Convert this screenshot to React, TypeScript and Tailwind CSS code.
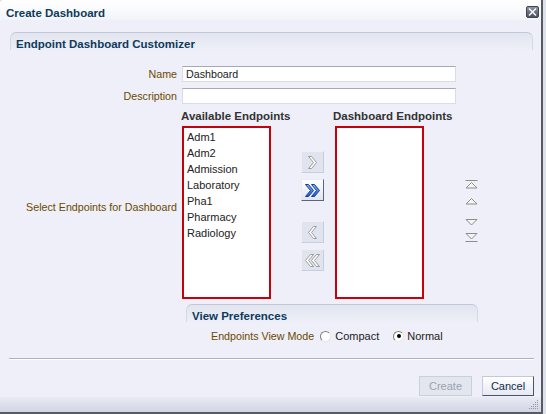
import React from 'react';

const endpoints = ['Adm1', 'Adm2', 'Admission', 'Laboratory', 'Pha1', 'Pharmacy', 'Radiology'];

// chevron glyph, drawn as outline
function Chevron({ dir, double, active }: { dir: 'right' | 'left'; double?: boolean; active?: boolean }) {
  const one = '0,0 3,0 8,6 3,12 0,12 5,6';
  const two = '6,0 9,0 14,6 9,12 6,12 11,6';
  const w = double ? 15 : 9;
  return (
    <svg width={w} height={13} viewBox={`-0.5 -0.5 ${w} 13`}>
      <defs>
        <linearGradient id="blu" x1="0" y1="0" x2="0" y2="1">
          <stop offset="0" stopColor="#7fb4f5" />
          <stop offset="1" stopColor="#1d58c8" />
        </linearGradient>
      </defs>
      <g transform={dir === 'left' ? `translate(${w - 1} 0) scale(-1 1)` : undefined}>
        <polygon
          points={one}
          fill={active ? 'url(#blu)' : '#ffffff'}
          stroke={active ? '#1b3f8f' : '#9b9b9b'}
          strokeWidth="1"
          strokeLinejoin="round"
        />
        {double && (
          <polygon
            points={two}
            fill={active ? 'url(#blu)' : '#ffffff'}
            stroke={active ? '#1b3f8f' : '#9b9b9b'}
            strokeWidth="1"
            strokeLinejoin="round"
          />
        )}
      </g>
    </svg>
  );
}

function ShuttleButton({ children, active }: { children: React.ReactNode; active?: boolean }) {
  return (
    <div
      className={`w-[23px] h-[22px] flex items-center justify-center border ${
        active
          ? 'bg-gradient-to-b from-white to-[#dfe4f0] border-[#e8ebf3] border-r-[#5d6577] border-b-[#5d6577]'
          : 'bg-[#dfe4ee] border-[#eef0f6] border-r-[#c8cfdc] border-b-[#c8cfdc]'
      }`}
    >
      {children}
    </div>
  );
}

function Reorder({ kind }: { kind: 'top' | 'up' | 'down' | 'bottom' }) {
  return (
    <svg width="13" height="9" viewBox="0 0 13 9">
      {kind === 'top' && (
        <>
          <line x1="0.5" y1="0.5" x2="12.5" y2="0.5" stroke="#8d8d8d" />
          <polygon points="1,8 6.5,2.5 12,8" fill="#f4f4f4" stroke="#8d8d8d" />
        </>
      )}
      {kind === 'up' && <polygon points="1,7 6.5,1.5 12,7" fill="#f4f4f4" stroke="#8d8d8d" />}
      {kind === 'down' && <polygon points="1,1.5 12,1.5 6.5,7" fill="#f4f4f4" stroke="#8d8d8d" />}
      {kind === 'bottom' && (
        <>
          <polygon points="1,0.5 12,0.5 6.5,6" fill="#f4f4f4" stroke="#8d8d8d" />
          <line x1="0.5" y1="8.5" x2="12.5" y2="8.5" stroke="#8d8d8d" />
        </>
      )}
    </svg>
  );
}

function Radio({ checked }: { checked?: boolean }) {
  return (
    <div className="w-[11px] h-[11px] rounded-full border border-[#7f7f7f] border-r-[#e8e8e8] border-b-[#e8e8e8] bg-white flex items-center justify-center">
      {checked && <div className="w-[4px] h-[4px] rounded-full bg-black" />}
    </div>
  );
}

export default function App() {
  return (
    <div className="w-[546px] h-[414px] bg-[#dfe1ea] font-['Liberation_Sans',Arial,sans-serif] text-[10.7px] text-[#222]">
      <div className="w-[543px] h-[414px] flex flex-col bg-[#eeeff8] border-r-2 border-b-2 border-[#555a63] rounded-tl-[4px]">
        {/* title bar */}
        <div className="h-[20px] flex items-start justify-between pl-[6px] pr-[2px] pt-[6px] bg-gradient-to-b from-white to-[#f2f4f9] rounded-tl-[4px]">
          <span className="text-[11.5px] leading-[16px] -mt-[1px] font-bold text-[#0e3a5c]">Create Dashboard</span>
          <div className="w-[13px] h-[12px] rounded-[2px] bg-gradient-to-b from-[#8d94a4] to-[#4a515f] border border-[#3f4551] flex items-center justify-center">
            <svg width="9" height="8" viewBox="0 0 9 8">
              <path d="M1 0.5 L8 7.5 M8 0.5 L1 7.5" stroke="#fff" strokeWidth="1.4" />
            </svg>
          </div>
        </div>

        {/* panel header */}
        <div className="mt-[12px] ml-[10px] mr-[8px] h-[18px] pl-[5px] pt-[4px] rounded-t-[6px] border-t border-x border-[#c2c8d6] border-x-[#d5d9e3] bg-gradient-to-b from-[#e1e5ef] to-[#eeeff8]">
          <div className="text-[11.5px] leading-[14px] font-bold text-[#0e3a5c]">Endpoint Dashboard Customizer</div>
        </div>

        {/* name / description */}
        <div className="mt-[16px] flex items-center gap-[5px] h-[16px]">
          <div className="w-[177px] text-right leading-[16px] text-[#6a4a00]">Name</div>
          <div className="w-[274px] h-[16px] bg-white border border-[#d9dce4] border-t-[#a3a9b5] pl-[3px] leading-[14px]">Dashboard</div>
        </div>
        <div className="mt-[6px] flex items-center gap-[5px] h-[16px]">
          <div className="w-[177px] text-right leading-[16px] text-[#6a4a00]">Description</div>
          <div className="w-[274px] h-[16px] bg-white border border-[#d9dce4] border-t-[#a3a9b5]" />
        </div>

        {/* shuttle */}
        <div className="mt-[5px] flex items-center h-[190px]">
          <div className="w-[177px] text-right leading-[16px] text-[#6a4a00] mt-[5px]">Select Endpoints for Dashboard</div>
          <div className="ml-[4px] flex items-start h-[190px]">
            <div className="w-[90px] flex flex-col">
              <div className="h-[14px] leading-[14px] text-[11.5px] font-bold text-[#333] whitespace-nowrap">Available Endpoints</div>
              <div className="mt-[3px] ml-[1px] w-[89px] h-[173px] bg-white border-2 border-[#c8000a] pt-[1px] pl-[3px]">
                {endpoints.map((e) => (
                  <div key={e} className="leading-[16px] text-[11px] text-[#222]">{e}</div>
                ))}
              </div>
            </div>
            <div className="ml-[30px] mt-[42px] flex flex-col">
              <ShuttleButton><Chevron dir="right" /></ShuttleButton>
              <div className="mt-[6px]">
                <ShuttleButton active><Chevron dir="right" double active /></ShuttleButton>
              </div>
              <div className="mt-[20px]">
                <ShuttleButton><Chevron dir="left" /></ShuttleButton>
              </div>
              <div className="mt-[6px]">
                <ShuttleButton><Chevron dir="left" double /></ShuttleButton>
              </div>
            </div>
            <div className="ml-[9px] w-[91px] flex flex-col">
              <div className="h-[14px] leading-[14px] text-[11.5px] font-bold text-[#333] whitespace-nowrap">Dashboard Endpoints</div>
              <div className="mt-[3px] ml-[2px] w-[89px] h-[173px] bg-white border-2 border-[#c8000a]" />
            </div>
            <div className="ml-[41px] mt-[71px] flex flex-col">
              <Reorder kind="top" />
              <div className="mt-[8px]"><Reorder kind="up" /></div>
              <div className="mt-[12px]"><Reorder kind="down" /></div>
              <div className="mt-[6px]"><Reorder kind="bottom" /></div>
            </div>
          </div>
        </div>

        {/* view preferences */}
        <div className="mt-[5px] ml-[186px] w-[292px] h-[18px] pl-[5px] pt-[4px] rounded-t-[6px] border-t border-x border-[#c2c8d6] border-x-[#d5d9e3] bg-gradient-to-b from-[#e1e5ef] to-[#eeeff8]">
          <div className="text-[11.5px] leading-[14px] font-bold text-[#0e3a5c]">View Preferences</div>
        </div>
        <div className="mt-[6px] ml-[211px] h-[16px] flex items-center">
          <span className="leading-[16px] text-[#6a4a00]">Endpoints View Mode</span>
          <div className="ml-[6px]"><Radio /></div>
          <span className="ml-[4px] leading-[16px] text-[11px]">Compact</span>
          <div className="ml-[14px]"><Radio checked /></div>
          <span className="ml-[3px] leading-[16px] text-[11px]">Normal</span>
        </div>

        {/* separator */}
        <div className="mt-[14px] ml-[9px] mr-[7px] h-[2px] border-t border-[#a9b1c5] border-b border-b-white" />

        {/* buttons */}
        <div className="mt-[16px] mr-[7px] flex justify-end gap-[10px] text-[11px]">
          <div className="w-[53px] h-[20px] flex items-center justify-center bg-[#e2e6ee] border border-[#c9cfdb] text-[#9aa3b0]">Create</div>
          <div className="w-[52px] h-[20px] flex items-center justify-center bg-gradient-to-b from-white to-[#e6e9f2] border border-[#c3c9d6] border-r-[#4c5567] border-b-[#4c5567] text-[#0f2d4d]">Cancel</div>
        </div>

        {/* footer */}
        <div className="mt-[1px] flex-1 bg-gradient-to-b from-[#e9ebf4] to-[#d1d5e4] flex justify-end items-end pr-[2px] pb-[2px]">
          <svg width="10" height="10" viewBox="0 0 10 10">
            {[[8, 0], [8, 2], [6, 2], [8, 4], [6, 4], [4, 4], [8, 6], [6, 6], [4, 6], [2, 6], [8, 8], [6, 8], [4, 8], [2, 8], [0, 8]].map(([x, y]) => (
              <rect key={`${x}-${y}`} x={x} y={y} width="1" height="1" fill="#9098a8" />
            ))}
          </svg>
        </div>
      </div>
    </div>
  );
}
